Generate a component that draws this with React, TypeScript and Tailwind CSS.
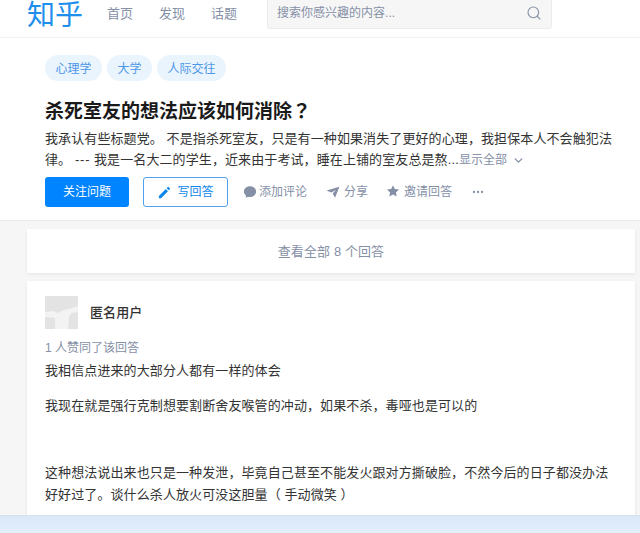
import { Search, ChevronDown, Ellipsis } from "lucide-react";

const font = "font-['Liberation_Sans','Noto_Sans_CJK_SC',sans-serif]";

const Header = () => {
  return (
    <div className="h-[38px] bg-white border-b border-[#f0f2f7] flex items-start pl-[27px] overflow-hidden">
      <div className="text-[28px] leading-[32px] text-[#1e8fec] w-[80px]">知乎</div>
      <div className="flex gap-[26px] text-[13px] leading-[28px] text-[#8590a6]">
        <span>首页</span>
        <span>发现</span>
        <span>话题</span>
      </div>
      <div className="ml-[30px] -mt-[4px] w-[285px] h-[33px] bg-[#f6f6f6] border border-[#ebebeb] rounded-[3px] flex items-center justify-between pl-[9px] pr-[9px] text-[12px] text-[#8590a6]">
        <span>搜索你感兴趣的内容...</span>
        <Search size={16} strokeWidth={1.6} />
      </div>
    </div>
  );
};

const Tag = ({ label }: { label: string }) => (
  <div className="h-[26px] px-[10.500px] rounded-full bg-[#eaf4fd] text-[#4d97e8] text-[12px] leading-[28px]">{label}</div>
);

const Question = () => {
  return (
    <div className="bg-white pl-[45px] pr-[25px] pt-[17px] h-[183px] border-b border-[#ececec]">
      <div className="flex gap-[5px]">
        <Tag label="心理学" />
        <Tag label="大学" />
        <Tag label="人际交往" />
      </div>
      <h1 className="mt-[17px] h-[26px] text-[19px] leading-[24px] font-bold text-[#1a1a1a]">
        杀死室友的想法应该如何消除<span className="font-['Noto_Sans_CJK_TC',sans-serif]">？</span>
      </h1>
      <p className="mt-[4px] h-[42px] text-[13px] tracking-[0.1px] leading-[21px] text-[#333333]">
        我承认有些标题党。 不是指杀死室友，只是有一种如果消失了更好的心理，我担保本人不会触犯法律。 <span className="tracking-[0.8px]">---</span> 我是一名大二的学生，近来由于考试，睡在上铺的室友总是熬...
        <span className="text-[#8590a6] text-[12px] tracking-normal">显示全部</span>
        <ChevronDown size={13} strokeWidth={2.5} className="inline ml-[5px] text-[#8590a6]" />
      </p>
      <div className="mt-[7px] flex items-center text-[12px] text-[#8590a6]">
        <button className="w-[84px] h-[30px] bg-[#0084ff] rounded-[3px] text-white">关注问题</button>
        <button className="ml-[14px] w-[85px] h-[30px] border border-[#4fa3ee] rounded-[3px] text-[#0f88eb] flex items-center justify-center gap-[5px]">
          <svg width="15" height="15" viewBox="0 0 24 24" fill="currentColor">
            <path d="M3 17.500V21h3.500L17.600 9.900l-3.500-3.500L3 17.500zM20.700 6.800a1 1 0 0 0 0-1.400l-2.100-2.100a1 1 0 0 0-1.400 0l-1.700 1.700 3.500 3.500 1.700-1.700z" />
          </svg>
          写回答
        </button>
        <div className="ml-[15px] flex items-center gap-[2px]">
          <svg width="14" height="14" viewBox="0 0 24 24" fill="currentColor" className="-mt-[1px]">
            <path d="M12 2C6 2 1.500 6.200 1.500 11.300c0 2.900 1.500 5.400 3.800 7.100L4.500 22l4.300-2c1 .3 2.100.5 3.200.5 6 0 10.500-4.100 10.500-9.200S18 2 12 2z" />
          </svg>
          <span>添加评论</span>
        </div>
        <div className="ml-[19px] flex items-center gap-[4px]">
          <svg width="14" height="14" viewBox="0 0 24 24" fill="currentColor">
            <path d="M1 9.500 23 3l-7.500 19-4-7.500 5.500-6-8 4.500L1 9.500z" />
          </svg>
          <span>分享</span>
        </div>
        <div className="ml-[18px] flex items-center gap-[4px]">
          <svg width="14" height="14" viewBox="0 0 24 24" fill="currentColor" className="-mt-[2px]">
            <path d="m12 2 3.100 6.600 7.200.9-5.300 5 1.400 7.100L12 18.100l-6.400 3.500L7 14.500l-5.300-5 7.200-.9L12 2z" />
          </svg>
          <span>邀请回答</span>
        </div>
        <Ellipsis size={14} className="ml-[19px]" />
      </div>
    </div>
  );
};

const Answer = () => {
  return (
    <div className="mt-[8px] bg-white shadow-[0_1px_3px_rgba(26,26,26,0.08)] px-[18px] pt-[15px] h-[300px] text-[13px] tracking-[0.1px] text-[#333333]">
      <div className="flex items-center gap-[12px]">
        <div className="w-[33px] h-[33px] bg-[#e3e3e3]">
          <svg width="33" height="33" viewBox="0 0 33 33" fill="#f3f3f3">
            <path d="M0 16 8 15 12 17 20 14 30 11 33 10 33 16 26 17 24 21 23 33 10 33 10 22 0 21z" />
          </svg>
        </div>
        <span className="font-medium">匿名用户</span>
      </div>
      <div className="mt-[10px] text-[#8590a6] text-[12px] tracking-normal leading-[18px]">1 人赞同了该回答</div>
      <p className="mt-[3px] leading-[22px]">我相信点进来的大部分人都有一样的体会</p>
      <p className="mt-[13px] leading-[22px]">我现在就是强行克制想要割断舍友喉管的冲动，如果不杀，毒哑也是可以的</p>
      <p className="mt-[45px] leading-[22px]">
        这种想法说出来也只是一种发泄，毕竟自己甚至不能发火跟对方撕破脸，不然今后的日子都没办法好好过了。谈什么杀人放火可没这胆量（ 手动微笑 ）
      </p>
    </div>
  );
};

const App = () => {
  return (
    <div className={`relative h-[533px] overflow-hidden bg-[#f6f6f6] ${font}`}>
      <Header />
      <Question />
      <div className="ml-[27px] mr-[5px] mt-[8px]">
        <div className="h-[44px] pt-[1px] bg-white shadow-[0_1px_3px_rgba(26,26,26,0.08)] flex items-center justify-center text-[13px] tracking-[0.1px] text-[#8590a6]">
          查看全部 8 个回答
        </div>
        <Answer />
      </div>
      {/* browser strip along the bottom */}
      <div className="absolute left-0 right-0 bottom-0 h-[18px] bg-[linear-gradient(#d9e8f8,#e4eefb)] border-t border-[#d3e2f3]" />
    </div>
  );
};

export default App;
